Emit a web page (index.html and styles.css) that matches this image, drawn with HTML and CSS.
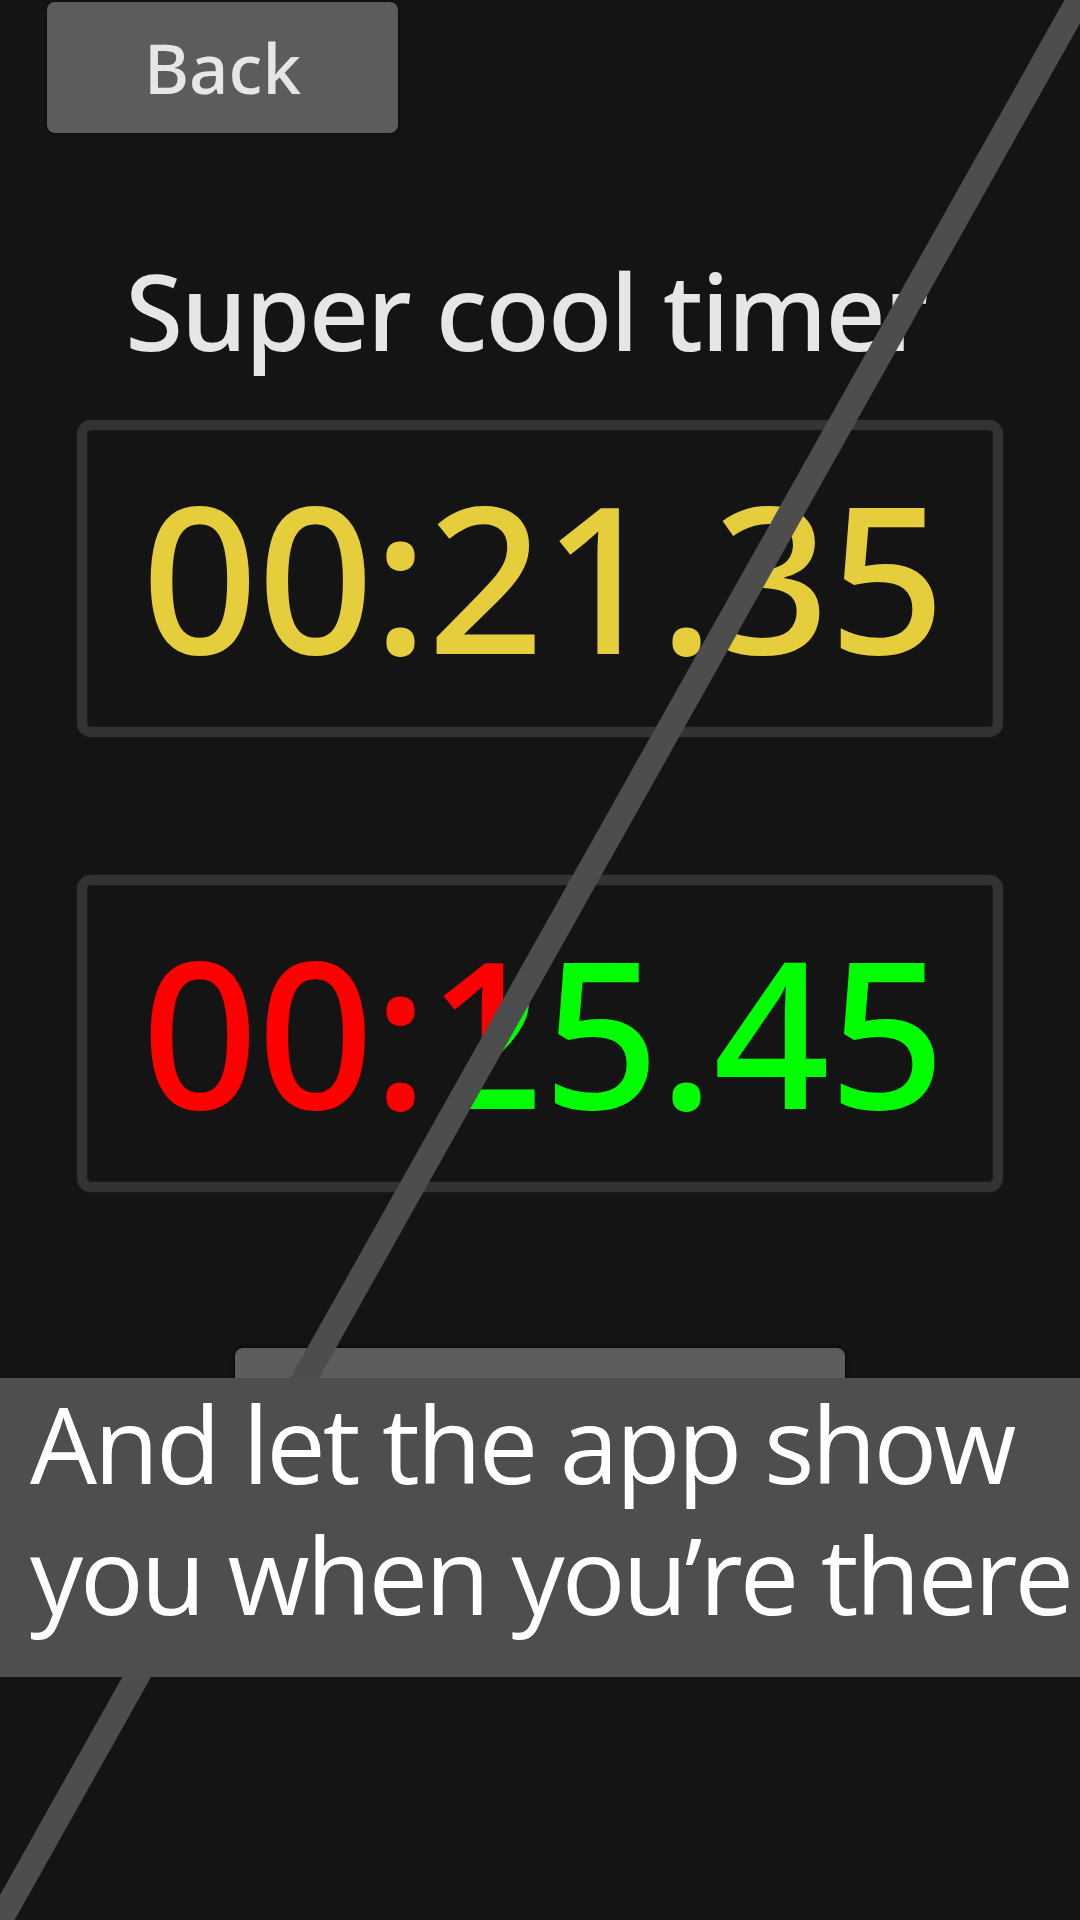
FILE: index.html
```html
<!DOCTYPE html>
<html lang="en">
<head>
<meta charset="utf-8">
<title>Super cool timer</title>
<link rel="stylesheet" href="styles.css">
</head>
<body>
<div class="screen">
  <div class="app">
    <button class="back">Back</button>
    <h1 class="title">Super cool timer</h1>
    <div class="timer">
      <div class="layer"><span class="digits yellow">00:21.35</span></div>
    </div>
    <div class="timer timer-b">
      <div class="layer before"><span class="digits red">00:15.45</span></div>
      <div class="layer after"><span class="digits green">00:25.45</span></div>
    </div>
    <div class="action"></div>
  </div>
  <svg class="slash" width="1080" height="1920" viewBox="0 0 1080 1920" aria-hidden="true">
    <line x1="1090" y1="-20" x2="-11" y2="1940" stroke="#4d4d4d" stroke-width="25"/>
  </svg>
  <div class="caption">And let the app show<br>you when you’re there</div>
</div>
</body>
</html>
```
FILE: styles.css
```css
html, body {
  margin: 0;
  padding: 0;
  background: #141414;
}

.screen {
  position: relative;
  width: 1080px;
  height: 1920px;
  overflow: hidden;
  background: #141414;
  font-family: "Noto Sans", "Open Sans", sans-serif;
}

.app {
  display: flex;
  flex-direction: column;
  align-items: center;
  padding-top: 2px;
}

.back {
  align-self: flex-start;
  margin-left: 47px;
  width: 351px;
  height: 131px;
  padding: 0;
  border: 0;
  border-radius: 8px;
  background: #5c5c5c;
  color: #e6e6e6;
  font-family: "Noto Sans", "Open Sans", sans-serif;
  font-size: 69px;
  font-weight: 500;
  line-height: 1;
  box-shadow: 0 0 3px rgba(0, 0, 0, 0.7);
}

.title {
  margin: 115px 28px 0 0;
  font-size: 105px;
  font-weight: 500;
  line-height: 126px;
  letter-spacing: -1.7px;
  color: #e6e6e6;
}

.timer {
  box-sizing: border-box;
  width: 926px;
  height: 317px;
  margin-top: 46px;
  border: 10px solid #333333;
  border-radius: 14px;
  box-shadow: 0 0 3px #262626, inset 0 0 3px #262626;
  display: grid;
}

.timer-b {
  margin-top: 138px;
}

.layer {
  grid-area: 1 / 1;
  display: flex;
  align-items: center;
  justify-content: center;
  padding-bottom: 8px;
  padding-left: 6px;
}

.before {
  clip-path: polygon(0 0, 492px 0, 325px 297px, 0 297px);
}

.after {
  clip-path: polygon(492px 0, 100% 0, 100% 100%, 325px 297px);
}

.digits {
  font-size: 204px;
  line-height: 1;
  font-weight: 500;
  letter-spacing: -1px;
  white-space: nowrap;
}

.yellow { color: #e6cd3c; }
.red { color: #ff0000; }
.green { color: #00ff00; }

.action {
  width: 610px;
  height: 120px;
  margin-top: 156px;
  border-radius: 8px;
  background: #5c5c5c;
  box-shadow: 0 0 4px #000;
}

.slash {
  position: absolute;
  left: 0;
  top: 0;
  z-index: 1;
  pointer-events: none;
}

.caption {
  position: absolute;
  left: 0;
  right: 0;
  top: 1378px;
  height: 299px;
  z-index: 2;
  box-sizing: border-box;
  padding-left: 30px;
  background: #4e4e4e;
  color: #ffffff;
  font-family: "Open Sans", "Noto Sans", sans-serif;
  font-size: 106px;
  line-height: 131px;
  letter-spacing: -3px;
  white-space: nowrap;
}
```
